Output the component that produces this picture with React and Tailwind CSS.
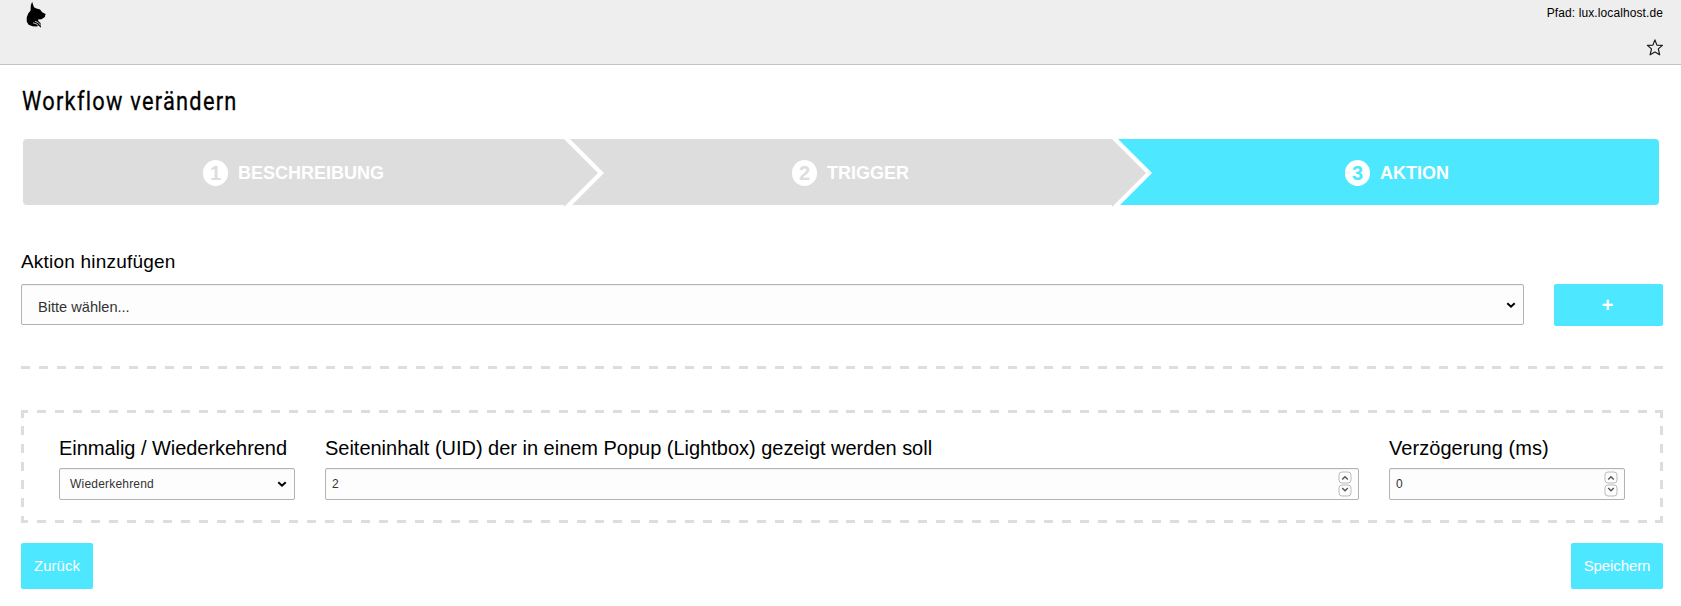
import React from "react";

const steps = [
  { n: "1", label: "BESCHREIBUNG", box: "w-[541px] gap-[10px] rounded-l-[4px] bg-[#ddd] text-[#ddd]" },
  { n: "2", label: "TRIGGER", box: "w-[548px] gap-[10px] pl-[25px] bg-[#ddd] text-[#ddd]" },
  { n: "3", label: "AKTION", box: "w-[547px] gap-[10px] pl-[23px] rounded-r-[4px] bg-[#4de8ff] text-[#4de8ff]" },
];

function Arrow() {
  return (
    <svg className="absolute left-full top-0 z-10" width="40" height="69" viewBox="0 0 40 69">
      <path d="M0 0H6L40 34L5 69H0Z" fill="#fff" />
      <path d="M0 0L34 34L0 68Z" fill="#ddd" />
    </svg>
  );
}

function Chevron({ className }) {
  return (
    <svg className={className} width="10" height="7" viewBox="0 0 10 7" fill="none" stroke="#000" strokeWidth="2">
      <path d="M1.3 1.2L5 4.7L8.7 1.2" />
    </svg>
  );
}

function Spin({ up }) {
  return (
    <svg width="14" height="13" viewBox="0 0 14 13" fill="none">
      <rect x="1" y="1" width="12" height="11" rx="3" stroke="#bbb" />
      <path d={up ? "M4.2 8.5L7 5.8L9.8 8.5" : "M4.2 4L7 6.7L9.8 4"} stroke="#555" strokeWidth="1.4" />
    </svg>
  );
}

const field = "flex items-center rounded-[2px] border border-[#b3b3b3] bg-[#fdfdfd] text-[#333] shadow-[inset_0_1px_1px_rgba(0,0,0,0.05)]";

function NumberField({ value }) {
  return (
    <div className={`${field} h-8 justify-between pl-[6px] pr-[6px] text-[12px]`}>
      <span>{value}</span>
      <span className="flex flex-col">
        <Spin up />
        <Spin />
      </span>
    </div>
  );
}

export default function App() {
  return (
    <div className="h-[606px] w-[1681px] overflow-hidden bg-white font-['Liberation_Sans',Arial,sans-serif] text-black">
      <header className="flex h-[65px] justify-between border-b border-[#c3c3c3] bg-[#eee] pl-[26px] pr-[18px]">
        <svg className="mt-[1px]" width="20" height="28" viewBox="0 0 20 28">
          <path
            d="M6.1 .8L8 6.2L10.5 7.6L14 8.6L16.2 11.2L19.6 13L18.8 16L15.5 18.3L12 18.6L12.3 20L14.5 22L15 26.8L12.8 25L10.2 25.6L6.5 25.2L2.6 23.8L.8 20.8L.7 16.5L2.2 12.5L4.6 9.5L4.8 4.6Z"
            fill="#000"
          />
          <path d="M7 21.8L10.8 23L13.6 26.4M9 20.3L12.2 21.6L14.6 24.4" fill="none" stroke="#eee" strokeWidth=".8" />
        </svg>
        <div className="flex flex-col items-end pt-[5px]">
          <span className="text-[12px] leading-[16px] tracking-[0.1px]">Pfad: lux.localhost.de</span>
          <svg className="mt-[18px]" width="17" height="17" viewBox="0 0 17 17">
            <path d="M8.9 .9L10.9 6.1L16.4 6.4L12.3 9.9L13.7 15.8L8.9 13L4.1 15.8L5.5 9.9L1.4 6.4L6.9 6.1Z" fill="none" stroke="#1a1a1a" strokeWidth="1.2" strokeLinejoin="round" />
          </svg>
        </div>
      </header>

      <main className="flex flex-col pl-[21px] pr-[18px]">
        <h1 className="ml-px mt-[20px] h-[32px] w-max origin-left scale-x-[0.838] whitespace-nowrap font-['Roboto',sans-serif] text-[26px] font-normal leading-[32px] tracking-[1.5px] [-webkit-text-stroke:0.3px_#000]">
          Workflow verändern
        </h1>

        <nav className="ml-[2px] mt-[22px] flex h-[66px] w-[1636px]">
          {steps.map((s, i) => (
            <div key={s.n} className={`relative flex items-center justify-center ${s.box}`}>
              <span className="mt-[2px] flex h-[26px] w-[25px] items-center justify-center rounded-full bg-white text-[20px] font-bold leading-[26px]">
                {s.n}
              </span>
              <span className="mt-px text-[18px] font-bold leading-[20px] text-white">{s.label}</span>
              {i < 2 && <Arrow />}
            </div>
          ))}
        </nav>

        <label className="mt-[45px] text-[19px] leading-[24px] tracking-[0.2px]">Aktion hinzufügen</label>
        <div className="mt-[10px] flex gap-[30px]">
          <div className={`${field} h-[41px] flex-1 justify-between pl-[16px] pr-[7px] text-[14.6px]`}>
            <span className="pt-[6px]">Bitte wählen...</span>
            <Chevron className="mt-[2px]" />
          </div>
          <button className="h-[42px] w-[109px] rounded-[2px] bg-[#4de8ff] pr-[2px] text-[20px] font-bold text-white">+</button>
        </div>

        <hr className="mt-[40px] h-[3px] border-0 bg-[repeating-linear-gradient(90deg,#ddd_0_9px,transparent_9px_17.945px)]" />

        <section className="mt-[41px] grid h-[113px] grid-cols-[236px_1fr_236px] gap-x-[30px] bg-[image:repeating-linear-gradient(90deg,#ddd_-1.5px_7.5px,transparent_7.5px_16.478px),repeating-linear-gradient(90deg,#ddd_-1.5px_7.5px,transparent_7.5px_16.478px),repeating-linear-gradient(180deg,#ddd_-1.4px_7.5px,transparent_7.5px_16.45px),repeating-linear-gradient(180deg,#ddd_-1.4px_7.5px,transparent_7.5px_16.45px)] bg-[size:100%_3px,100%_3px,3px_100%,3px_100%] bg-[position:left_top,left_bottom,left_top,right_top] bg-no-repeat px-[38px] pt-[26px]">
          <div>
            <div className="mb-[8px] whitespace-nowrap text-[20px] leading-[24px] tracking-[-0.04px]">Einmalig / Wiederkehrend</div>
            <div className={`${field} h-8 justify-between pl-[10px] pr-[7px] text-[12px]`}>
              <span className="tracking-[0.2px]">Wiederkehrend</span>
              <Chevron />
            </div>
          </div>
          <div>
            <div className="mb-[8px] text-[20px] leading-[24px] tracking-[-0.015px]">Seiteninhalt (UID) der in einem Popup (Lightbox) gezeigt werden soll</div>
            <NumberField value="2" />
          </div>
          <div>
            <div className="mb-[8px] text-[20px] leading-[24px] tracking-[0.05px]">Verzögerung (ms)</div>
            <NumberField value="0" />
          </div>
        </section>

        <div className="mt-[20px] flex justify-between text-[15px] text-white">
          <button className="h-[46px] w-[72px] rounded-[2px] bg-[#4de8ff]">Zurück</button>
          <button className="h-[46px] w-[92px] rounded-[2px] bg-[#4de8ff] tracking-[-0.1px]">Speichern</button>
        </div>
      </main>
    </div>
  );
}
